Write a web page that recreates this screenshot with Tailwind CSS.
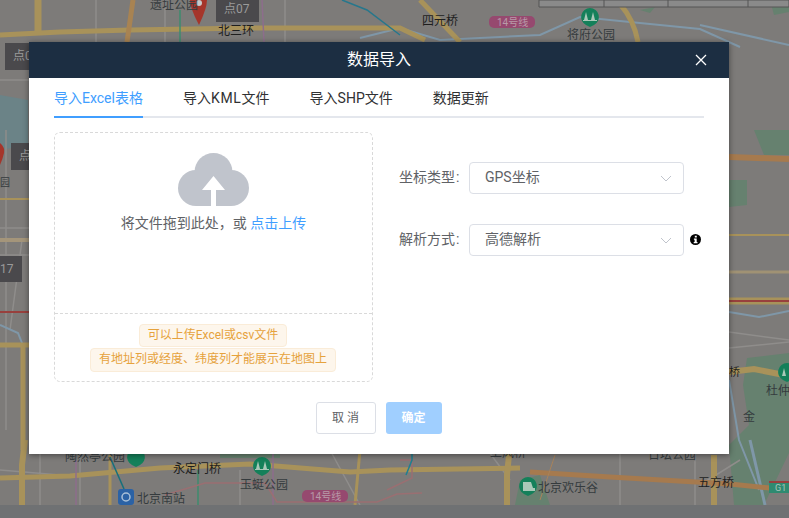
<!DOCTYPE html>
<html lang="zh-CN">
<head>
    <meta charset="UTF-8">
    <title>数据导入</title>
    <script src="https://cdn.jsdelivr.net/npm/@tailwindcss/browser@4"></script>
</head>
<body class="relative w-[789px] h-[518px] overflow-hidden bg-[#6f7173] font-['Roboto','Noto_Sans_CJK_SC',sans-serif]">

    <!-- 地图底图 -->
    <svg class="absolute left-0 top-0" width="789" height="505" viewBox="0 0 789 505" font-family="Roboto,'Noto Sans CJK SC',sans-serif">
        <rect width="789" height="505" fill="#7d7b79"/>
        <g fill="#66816f">
            <path d="M729 180h18v25l-18 2z"/>
            <path d="M754 130h35v25l-25 0z"/>
            <path d="M747 358l42-5v100l-25 52h-30l-5-60 20-20-6-40z"/>
            <path d="M220 440h60v18h-60z"/>
            <path d="M520 480l20-5 10 30h-35z"/>
            <path d="M640 10l15-3-5 6z"/>
            <path d="M0 95l28 5v45l-28 5z" fill="#6b8387"/>
            <path d="M770 0h19v12l-15 3z"/>
        </g>
        <g fill="none" stroke="#8f8d8b" stroke-width="1.500">
            <path d="M96 0v42M165 0v42M285 0v42M0 80h29M0 228h29M0 255h29M6 130v300M22 240l-12 90"/>
            <path d="M729 332l60 8M729 348l60-6M0 470l60 5M40 440v65M80 440v65M240 470v35M330 450l30 55M480 440l30 40M620 440v65M640 450l70 0M695 440v65M740 460l-40 25"/>
        </g>
        <g fill="none" stroke="#7f97a8" stroke-width="2">
            <path d="M360 38l40-10 40 12 100-5 40-18 120 12 40 18M700 25l89 20"/>
            <path d="M0 325l18 8 6 15M729 312l30 5 30-6"/>
            <path d="M729 380l10 60 20 50"/>
            <path d="M750 440l15 65" stroke-width="3"/>
        </g>
        <g fill="none" stroke="#a8925a" stroke-width="5">
            <path d="M0 35l60-3 70-2 120-2 150 0 25 12"/>
            <path d="M38 0v32" stroke-width="7"/>
            <path d="M0 199h29" stroke-width="2"/>
            <path d="M0 240h29" stroke-width="4" stroke="#a4957a"/>
            <path d="M0 345h29M23 345v105" stroke-width="5"/>
            <path d="M729 235h60" stroke-width="2"/>
            <path d="M729 272h60" stroke="#a09274" stroke-width="3"/>
            <path d="M729 301h60" stroke-width="7"/>
            <path d="M729 372l25-3 30 6" stroke-width="6"/>
            <path d="M0 478l70-2 90-8 90-4 100 8 40-2 130-2" stroke-width="5"/>
            <path d="M25 440l-3 25 0 40" stroke-width="6"/>
            <path d="M110 455v50M360 450l-5 55" stroke-width="3"/>
            <path d="M510 445l-3 30 0 30M714 455v50" stroke-width="6"/>
            <path d="M620 4q14 16 18 38" stroke-width="5"/>
        </g>
        <g fill="none">
            <path d="M133 0l-6 42" stroke="#a88352" stroke-width="5"/>
            <path d="M420 0l40 42" stroke="#a8925a" stroke-width="5"/>
            <path d="M729 157l60 2" stroke="#a67a4e" stroke-width="6"/>
            <path d="M530 472l80 5 120 7 40 4" stroke="#a67a4e" stroke-width="5"/>
            <path d="M0 312h29M729 301h60" stroke="#98403d" stroke-width="2"/>
            <path d="M180 10v32M198 470v35" stroke="#3e8c6d" stroke-width="1.500"/>
            <path d="M262 0l2 42M76 460v45M273 440v65" stroke="#8d6d8c" stroke-width="1.500"/>
            <path d="M342 0l25 10 33 25" stroke="#26778c" stroke-width="1.500"/>
            <path d="M110 457l14 32" stroke="#16707c" stroke-width="1.500"/>
            <path d="M165 495l40-12h60l12 19h100l20-8 25-1" stroke="#9a6f72" stroke-width="1.500"/>
            <path d="M400 460l12 0 0 18-25 12" stroke="#9a6f72" stroke-width="1.500"/>
            <path d="M412 440v20l-6 15" stroke="#1f7f91" stroke-width="1.500"/>
            <path d="M555 455l-15 45" stroke="#a8825a" stroke-width="1"/>
        </g>

        <!-- 右上角面板 -->
        <path d="M539 0h250v7h-250z" fill="#8a8a8a" stroke="#555" stroke-width="1"/>
        <path d="M604 0v7M668 0v7M748 0v7" stroke="#555"/>

        <!-- 点位标记 -->
        <g fill="#a5352a">
            <path d="M190 0h17q0 8-8 25q-9-17-9-25z"/>
            <path d="M0 143q5 4 4 10q-1 5-4 12z"/>
        </g>
        <circle cx="199" cy="3" r="3" fill="#c9c9c9"/>
        <g fill="#4a494c">
            <rect x="216" y="0" width="43" height="22"/>
            <rect x="5" y="43" width="24" height="27"/>
            <rect x="11" y="143" width="18" height="27"/>
            <rect x="0" y="256" width="22" height="26"/>
        </g>
        <g fill="#9a9a9a" font-size="12">
            <text x="224" y="13">点07</text>
            <text x="13" y="60">点0</text>
            <text x="19" y="160">点</text>
            <text x="0" y="273">17</text>
        </g>

        <!-- 地名 -->
        <g fill="#1e1e1e" font-size="12">
            <text x="218" y="35">北三环</text>
            <text x="422" y="25">四元桥</text>
            <text x="173" y="473">永定门桥</text>
            <text x="698" y="487">五方桥</text>
            <text x="729" y="376" font-size="11">桥</text>
        </g>
        <g fill="#353b3e" font-size="12">
            <text x="150" y="9">遗址公园</text>
            <text x="567" y="39">将府公园</text>
            <text x="65" y="461">陶然亭公园</text>
            <text x="240" y="489">玉蜓公园</text>
            <text x="137" y="503">北京南站</text>
            <text x="538" y="492">北京欢乐谷</text>
            <text x="648" y="459">日坛公园</text>
            <text x="490" y="457">上风桥</text>
            <text x="766" y="395">杜仲</text>
            <text x="743" y="421">金</text>
            <text x="0" y="186" font-size="10">园</text>
        </g>

        <!-- 线路牌 -->
        <rect x="489" y="16" width="46" height="12" rx="5" fill="#96496f"/>
        <rect x="302" y="490" width="46" height="12" rx="5" fill="#96496f"/>
        <g fill="#b89aa8" font-size="10">
            <text x="497" y="26">14号线</text>
            <text x="310" y="500">14号线</text>
        </g>
        <rect x="769" y="481" width="20" height="12" fill="#2f8a70"/>
        <rect x="769" y="481" width="20" height="2" fill="#98403d"/>
        <text x="775" y="491" fill="#a9c4ba" font-size="9">G1</text>

        <!-- 公园图标 -->
        <g fill="#14805a">
            <path d="M590 8a9 9 0 0 1 4 17l-4 2-4-2a9 9 0 0 1 4-17z"/>
            <path d="M262 457a9 9 0 0 1 4 17l-4 2-4-2a9 9 0 0 1 4-17z"/>
            <path d="M528 477a9 9 0 0 1 4 17l-4 2-4-2a9 9 0 0 1 4-17z"/>
            <path d="M136 448a9 9 0 0 1 4 17l-4 2-4-2a9 9 0 0 1 4-17z"/>
            <path d="M787 363a9 9 0 0 1 4 17l-4 2-4-2a9 9 0 0 1 4-17z"/>
        </g>
        <g fill="#a8c8b8">
            <path d="M586 12l2 8h-4zM593 12l2 8h-4zM583 20h14v1h-14z"/>
            <path d="M258 461l2 8h-4zM265 461l2 8h-4zM255 469h14v1h-14z"/>
            <path d="M523 482h8l2 6h2v3h-12zM784 368l2 8h-4z"/>
        </g>
        <rect x="118" y="489" width="16" height="16" rx="3" fill="#2b62a5"/>
        <circle cx="126" cy="497" r="4" fill="none" stroke="#a9c0d8" stroke-width="1.500"/>
    </svg>

    <!-- 弹窗 -->
    <div class="absolute left-[29px] top-[42px] w-[700px] h-[412px] bg-white shadow-[0_1px_6px_rgba(0,0,0,0.45)] flex flex-col">
        <div class="h-[36px] shrink-0 bg-[#1c2e42] relative flex items-center justify-center">
            <span class="text-white text-base">数据导入</span>
            <svg class="absolute right-[22px] top-[12px]" width="12" height="12" viewBox="0 0 12 12">
                <path d="M1 1l10 10M11 1L1 11" stroke="#fff" stroke-width="1.300" fill="none"/>
            </svg>
        </div>

        <div class="flex-1 px-[25px] flex flex-col">
            <div class="flex gap-[40px] h-[40px] border-b-2 border-[#e4e7ed] text-sm leading-[40px] text-[#303133]">
                <div class="h-[40px] text-[#409eff] border-b-2 border-[#409eff]">导入Excel表格</div>
                <div>导入<span class="tracking-[0.7px]">KML</span>文件</div>
                <div>导入SHP文件</div>
                <div>数据更新</div>
            </div>

            <div class="flex mt-[14px]">
                <div class="w-[319px] h-[250px] border border-dashed border-[#d9d9d9] rounded-md flex flex-col">
                    <div class="h-[181px] border-b border-dashed border-[#d9d9d9] flex flex-col items-center pt-[20px]">
                        <svg width="71" height="53" viewBox="0 0 71 53">
                            <circle cx="18" cy="35" r="18" fill="#c0c4cc"/>
                            <circle cx="53" cy="35" r="18" fill="#c0c4cc"/>
                            <circle cx="35.500" cy="19" r="19" fill="#c0c4cc"/>
                            <rect x="18" y="30" width="35" height="23" fill="#c0c4cc"/>
                            <path d="M35.500 23L47 37h-9v16h-5V37h-9z" fill="#fff"/>
                        </svg>
                        <div class="mt-[7px] text-sm leading-[20px] text-[#606266]">将文件拖到此处，或 <span class="text-[#409eff]">点击上传</span></div>
                    </div>
                    <div class="flex-1 flex flex-col items-center pt-[10px] pr-px gap-px text-xs text-[#e6a23c] text-center">
                        <span class="w-[148px] h-[23px] leading-[21px] bg-[#fdf6ec] border border-[#faecd8] rounded">可以上传Excel或csv文件</span>
                        <span class="w-[246px] h-[24px] leading-[21px] bg-[#fdf6ec] border border-[#faecd8] rounded">有地址列或经度、纬度列才能展示在地图上</span>
                    </div>
                </div>

                <div class="ml-[26px] pt-[30px] flex flex-col gap-[30px] text-sm text-[#606266]">
                    <div class="flex items-center">
                        <span class="w-[70px] leading-[16px] mb-[2px]">坐标类型<span class="ml-px">:</span></span>
                        <div class="w-[215px] h-[32px] border border-[#dcdfe6] rounded flex items-center justify-between pl-[15px] pr-[11px]">
                            <span class="leading-[16px] mb-[2px]">GPS坐标</span>
                            <svg width="12" height="7" viewBox="0 0 12 7"><path d="M1 1l5 5 5-5" fill="none" stroke="#c0c4cc"/></svg>
                        </div>
                    </div>
                    <div class="flex items-center">
                        <span class="w-[70px] leading-[16px] mb-[2px]">解析方式<span class="ml-px">:</span></span>
                        <div class="w-[215px] h-[32px] border border-[#dcdfe6] rounded flex items-center justify-between pl-[15px] pr-[11px]">
                            <span class="leading-[16px] mb-[2px]">高德解析</span>
                            <svg width="12" height="7" viewBox="0 0 12 7"><path d="M1 1l5 5 5-5" fill="none" stroke="#c0c4cc"/></svg>
                        </div>
                        <svg class="ml-[6px] mb-px" width="11" height="11" viewBox="0 0 11 11">
                            <circle cx="5.500" cy="5.500" r="5.500" fill="#000"/>
                            <path d="M4.800 1.800h2v1.700h-2zM3.900 4.600h2.800v3.400h.8v1.200H3.700V8h.9V5.700h-.7z" fill="#fff"/>
                        </svg>
                    </div>
                </div>
            </div>

            <div class="flex justify-center gap-[10px] mt-[20px] ml-[-1px]">
                <div class="w-[60px] h-[32px] border border-[#dcdfe6] rounded-[3px] text-xs text-[#606266] flex items-center justify-center">取 消</div>
                <div class="w-[56px] h-[32px] bg-[#a0cfff] rounded-[3px] text-xs font-bold text-white flex items-center justify-center">确定</div>
            </div>
        </div>
    </div>
</body>
</html>
